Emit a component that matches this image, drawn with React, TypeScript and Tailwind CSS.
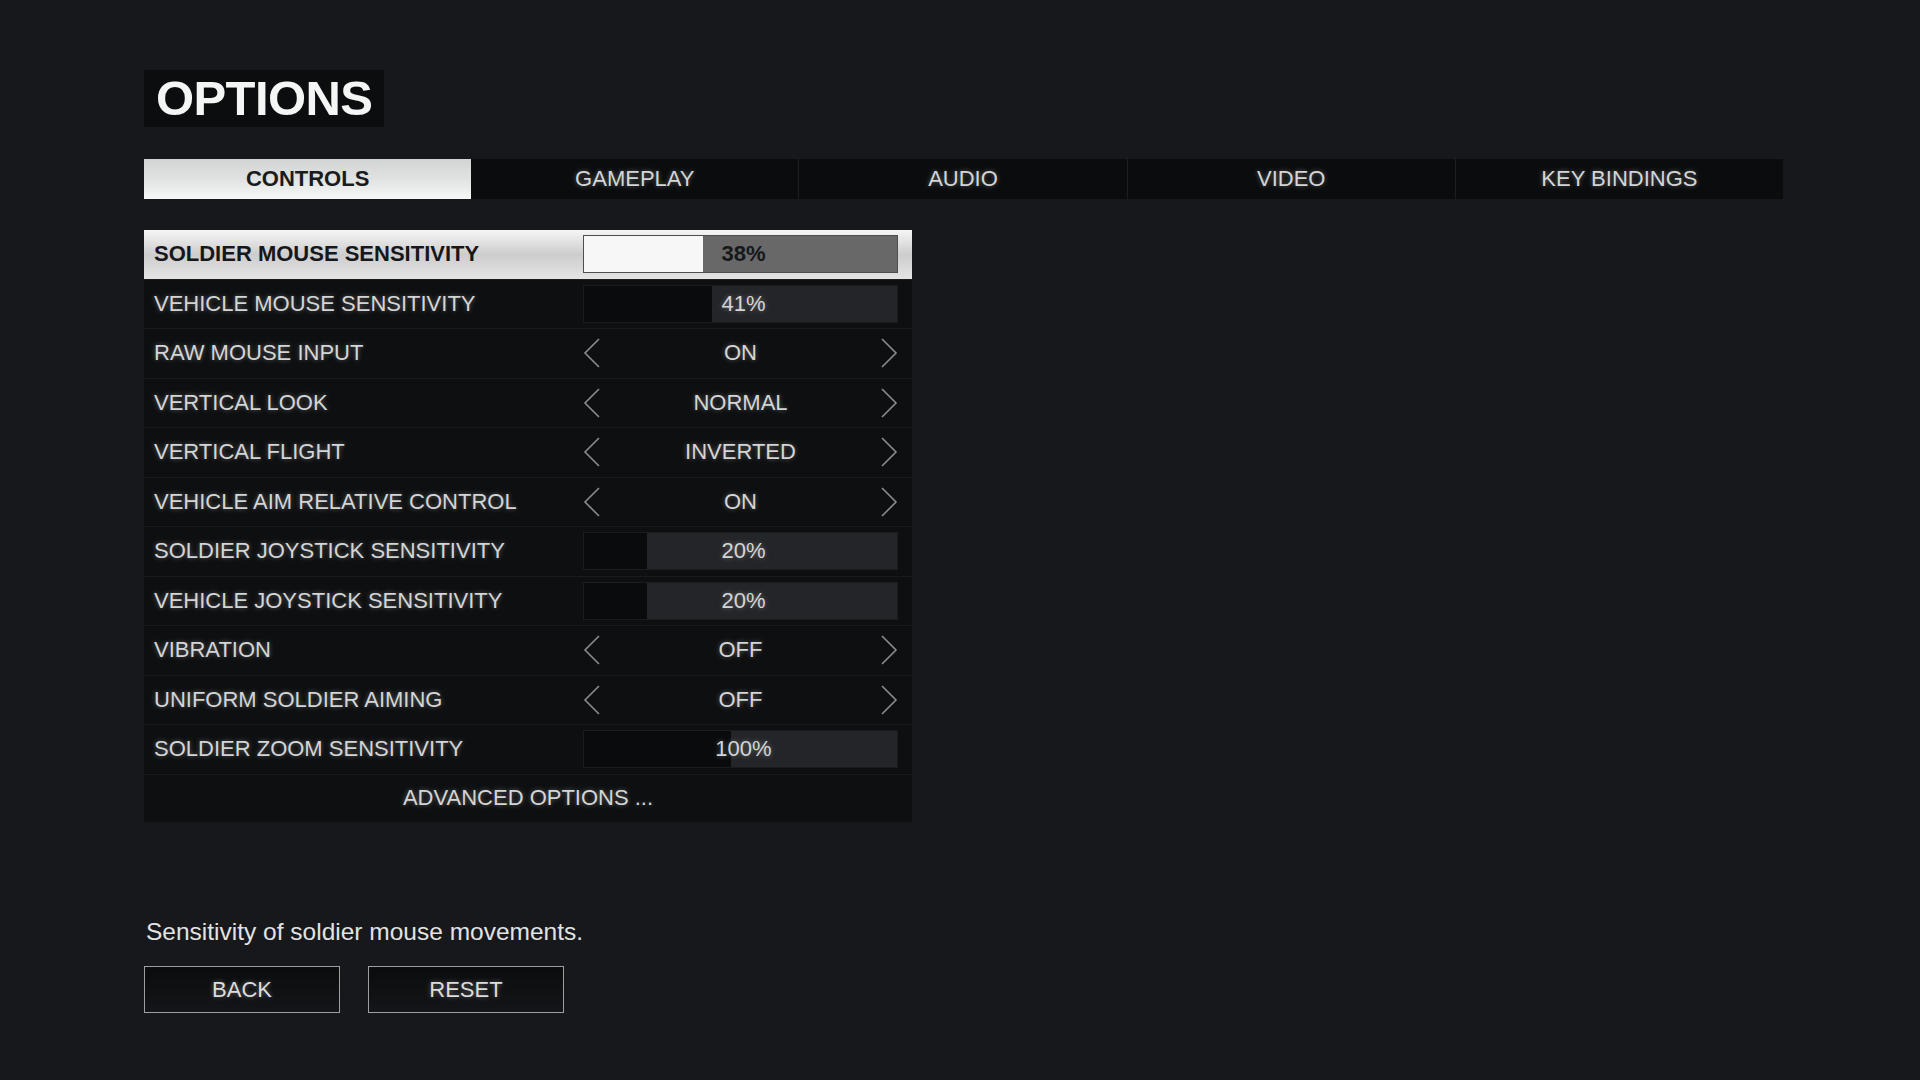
import React from "react";

type Row =
  | { label: string; kind: "slider"; value: string; fill: number }
  | { label: string; kind: "select"; value: string };

const rows: Row[] = [
  { label: "SOLDIER MOUSE SENSITIVITY", kind: "slider", value: "38%", fill: 0.38 },
  { label: "VEHICLE MOUSE SENSITIVITY", kind: "slider", value: "41%", fill: 0.41 },
  { label: "RAW MOUSE INPUT", kind: "select", value: "ON" },
  { label: "VERTICAL LOOK", kind: "select", value: "NORMAL" },
  { label: "VERTICAL FLIGHT", kind: "select", value: "INVERTED" },
  { label: "VEHICLE AIM RELATIVE CONTROL", kind: "select", value: "ON" },
  { label: "SOLDIER JOYSTICK SENSITIVITY", kind: "slider", value: "20%", fill: 0.2 },
  { label: "VEHICLE JOYSTICK SENSITIVITY", kind: "slider", value: "20%", fill: 0.2 },
  { label: "VIBRATION", kind: "select", value: "OFF" },
  { label: "UNIFORM SOLDIER AIMING", kind: "select", value: "OFF" },
  { label: "SOLDIER ZOOM SENSITIVITY", kind: "slider", value: "100%", fill: 0.47 },
];

const tabs = ["CONTROLS", "GAMEPLAY", "AUDIO", "VIDEO", "KEY BINDINGS"];

const glow = "[text-shadow:0_0_5px_rgba(255,255,255,0.35)]";

function Chevron({ dir }: { dir: "left" | "right" }) {
  return (
    <svg width="18" height="30" viewBox="0 0 18 30" className="shrink-0">
      <path
        d={dir === "left" ? "M16 1 L2 15 L16 29" : "M2 1 L16 15 L2 29"}
        fill="none"
        stroke="#8a8b8d"
        strokeWidth="1.6"
      />
    </svg>
  );
}

function OptionRow({ row, active }: { row: Row; active: boolean }) {
  return (
    <div
      className={`flex h-[48.5px] items-center pl-[10px] pr-[14px] ${
        active ? "bg-gradient-to-b from-[#f6f6f6] via-[#cdcdcd] to-[#e4e4e4]" : "bg-[#0e0f11]"
      }`}
    >
      <div
        className={`flex-1 text-[22px] leading-none ${
          active ? "font-bold text-[#16171a]" : `text-[#d4d5d6] ${glow}`
        }`}
      >
        {row.label}
      </div>
      {row.kind === "slider" ? (
        <div
          className={`relative flex h-[38px] w-[315px] items-center justify-center border pl-[6px] ${
            active ? "border-[#4e4e4e] bg-[#686868]" : "border-[#1b1c1f] bg-[#242528]"
          }`}
        >
          <div
            className={`absolute left-0 top-0 h-full ${active ? "bg-[#f7f7f7]" : "bg-[#0a0b0d]"}`}
            style={{ width: `${row.fill * 100}%` }}
          />
          <span
            className={`relative text-[22px] leading-none ${
              active ? "font-bold text-[#16171a]" : `text-[#d4d5d6] ${glow}`
            }`}
          >
            {row.value}
          </span>
        </div>
      ) : (
        <div className="flex h-[38px] w-[315px] items-center justify-between">
          <Chevron dir="left" />
          <span className={`text-[22px] leading-none text-[#d4d5d6] ${glow}`}>{row.value}</span>
          <Chevron dir="right" />
        </div>
      )}
    </div>
  );
}

export default function App() {
  return (
    <div
      className="min-h-[1080px] w-full bg-[#17181b] pl-[144px] pt-[70px]"
      style={{ fontFamily: '"Liberation Sans", Arial, sans-serif' }}
    >
      <div className="inline-flex h-[57px] items-center bg-[#0c0d0f] px-[12px]">
        <h1 className="text-[49px] font-bold leading-none tracking-[-0.6px] text-[#f4f5f5]">OPTIONS</h1>
      </div>

      <div className="mt-[32px] flex h-[40px] w-[1639px] bg-[#0b0c0e]">
        {tabs.map((t, i) => (
          <div
            key={t}
            className={`flex flex-1 items-center justify-center text-[22px] leading-none ${
              i === 0
                ? "bg-gradient-to-b from-[#d2d3d3] via-[#e1e2e2] to-[#f6f7f7] font-bold text-[#1a1b1d]"
                : `border-l border-[#1d1e21] text-[#d4d5d6] ${glow}`
            } ${i === 1 ? "border-l-0" : ""}`}
          >
            {t}
          </div>
        ))}
      </div>

      <div className="mt-[31px] flex w-[768px] flex-col gap-[1px] bg-[#1a1b1e]">
        {rows.map((r, i) => (
          <OptionRow key={r.label} row={r} active={i === 0} />
        ))}
        <div
          className={`flex h-[47px] items-center justify-center bg-[#0e0f11] text-[22px] leading-none text-[#d4d5d6] ${glow}`}
        >
          ADVANCED OPTIONS ...
        </div>
      </div>

      <p className="ml-[2px] mt-[98px] text-[24.5px] leading-none text-[#e2e3e4]">
        Sensitivity of soldier mouse movements.
      </p>

      <div className="mt-[22px] flex gap-[28px]">
        {["BACK", "RESET"].map((b) => (
          <button
            key={b}
            className={`flex h-[47px] w-[196px] items-center justify-center border border-[#9d9e9f] bg-gradient-to-b from-[#0b0c0e] to-[#141518] text-[22px] leading-none text-[#dcdddd] ${glow}`}
          >
            {b}
          </button>
        ))}
      </div>
    </div>
  );
}
